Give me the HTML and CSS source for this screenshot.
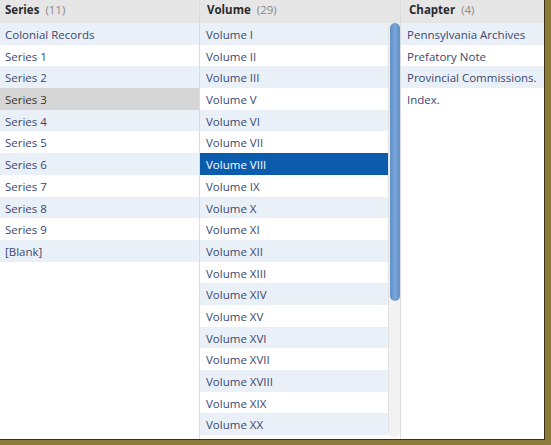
FILE: index.html
```html
<!DOCTYPE html>
<html>
<head>
<meta charset="utf-8">
<link rel="stylesheet" href="styles.css">
</head>
<body>
<div class="frame">
  <div class="page">
    <div class="col col-series">
      <div class="head"><b>Series</b><span class="count">(11)</span></div>
      <div class="list">
        <div class="row alt">Colonial Records</div>
        <div class="row">Series 1</div>
        <div class="row alt">Series 2</div>
        <div class="row sel-gray">Series 3</div>
        <div class="row alt">Series 4</div>
        <div class="row">Series 5</div>
        <div class="row alt">Series 6</div>
        <div class="row">Series 7</div>
        <div class="row alt">Series 8</div>
        <div class="row">Series 9</div>
        <div class="row alt">[Blank]</div>
      </div>
    </div>
    <div class="col col-volume">
      <div class="head"><b>Volume</b><span class="count">(29)</span></div>
      <div class="vbody">
        <div class="list">
          <div class="row alt">Volume I</div>
          <div class="row">Volume II</div>
          <div class="row alt">Volume III</div>
          <div class="row">Volume V</div>
          <div class="row alt">Volume VI</div>
          <div class="row">Volume VII</div>
          <div class="row sel-blue">Volume VIII</div>
          <div class="row">Volume IX</div>
          <div class="row alt">Volume X</div>
          <div class="row">Volume XI</div>
          <div class="row alt">Volume XII</div>
          <div class="row">Volume XIII</div>
          <div class="row alt">Volume XIV</div>
          <div class="row">Volume XV</div>
          <div class="row alt">Volume XVI</div>
          <div class="row">Volume XVII</div>
          <div class="row alt">Volume XVIII</div>
          <div class="row">Volume XIX</div>
          <div class="row alt">Volume XX</div>
        </div>
        <div class="track"><div class="thumb"></div></div>
      </div>
    </div>
    <div class="col col-chapter">
      <div class="head"><b>Chapter</b><span class="count">(4)</span></div>
      <div class="list">
        <div class="row alt">Pennsylvania Archives</div>
        <div class="row">Prefatory Note</div>
        <div class="row alt">Provincial Commissions.</div>
        <div class="row">Index.</div>
      </div>
    </div>
  </div>
</div>
</body>
</html>
```

FILE: styles.css
```css
html, body {
  margin: 0;
  padding: 0;
  background: #fff;
}
.frame {
  width: 551px;
  height: 445px;
  background: #8c7a3a;
  overflow: hidden;
}
.page {
  width: 545px;
  height: 440px;
  background: #fff;
  border-right: 1px solid #3b3010;
  border-bottom: 1px solid #3b3010;
  box-sizing: border-box;
  display: flex;
  overflow: hidden;
  font-family: "Open Sans", "Noto Sans", sans-serif;
  font-size: 11.5px;
  color: #3a4870;
}
.col {
  display: flex;
  flex-direction: column;
  min-height: 0;
}
.col-series {
  width: 199px;
  border-right: 1px solid #dcdcdc;
}
.col-volume {
  width: 200px;
  border-right: 1px solid #dcdcdc;
}
.col-chapter {
  flex: 1;
}
.head {
  height: 23px;
  flex: none;
  background: #e6e6e6;
  display: flex;
  align-items: center;
  padding: 0 0 4px 5px;
  gap: 6px;
  color: #222;
  font-size: 11.5px;
  box-sizing: border-box;
}
.col-volume .head { padding-left: 7px; }
.col-chapter .head { padding-left: 8px; }
.head b { font-weight: 700; color: #2a2a2a; }
.count { color: #8a8a8a; }
.list {
  display: flex;
  flex-direction: column;
}
.row {
  height: 21.7px;
  line-height: 21.7px;
  padding-left: 5px;
  padding-top: 1px;
  box-sizing: border-box;
  white-space: nowrap;
  flex: none;
}
.col-volume .row { padding-left: 6px; }
.col-chapter .row { padding-left: 6px; }
.row.alt { background: #eaf0f8; }
.row.sel-gray { background: #d6d6d6; color: #333; }
.row.sel-blue { background: #0b5cad; color: #fff; }
.vbody {
  flex: 1;
  display: flex;
  min-height: 0;
}
.vbody .list {
  flex: 1;
}
.track {
  width: 12px;
  flex: none;
  margin-bottom: 2px;
  background: #f2f2f2;
  border-left: 1px solid #e2e2e2;
  border-radius: 0 0 6px 6px;
  box-sizing: border-box;
}
.thumb {
  width: 10px;
  height: 278px;
  margin-left: 1px;
  background: linear-gradient(to right, #5f8fc8, #7aa6da 50%, #5f8fc8);
  border-radius: 5px;
}
```
